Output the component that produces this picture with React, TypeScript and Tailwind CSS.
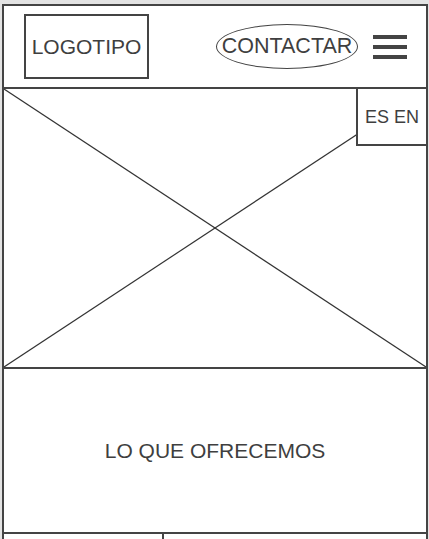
import React from 'react';

const font = { fontFamily: '"Liberation Sans", Arial, sans-serif' };

function Hamburger() {
  return (
    <div className="flex flex-col gap-[6px]">
      <div className="w-[34px] h-[4px] bg-[#444]" />
      <div className="w-[34px] h-[4px] bg-[#444]" />
      <div className="w-[34px] h-[4px] bg-[#444]" />
    </div>
  );
}

export default function App() {
  return (
    <div className="min-h-[539px] bg-[#e3e3e3] pl-[2px] pr-[1px] pt-[4px] text-[#3f3f3f]" style={font}>
      <div className="border-2 border-b-0 border-[#444] bg-white min-h-[535px]">
        {/* Header */}
        <header className="h-[83px] border-b-2 border-[#444] flex items-center justify-between pl-[20px] pr-[19px]">
          <div className="w-[125px] h-[65px] border-2 border-[#444] flex items-center justify-center text-[21px] leading-none">
            LOGOTIPO
          </div>
          <div className="flex items-center gap-[15px]">
            <div className="w-[142px] h-[45px] border border-[#444] rounded-[50%] flex items-center justify-center text-[21.5px] leading-none whitespace-nowrap">
              CONTACTAR
            </div>
            <Hamburger />
          </div>
        </header>

        {/* Hero placeholder */}
        <div className="relative h-[280px] border-b-2 border-[#444]">
          <svg className="absolute inset-0 w-full h-full" viewBox="0 0 100 100" preserveAspectRatio="none">
            <line x1="0" y1="0" x2="100" y2="100" stroke="#333" strokeWidth="1.2" vectorEffect="non-scaling-stroke" />
            <line x1="0" y1="100" x2="100" y2="0" stroke="#333" strokeWidth="1.2" vectorEffect="non-scaling-stroke" />
          </svg>
          <div className="absolute top-0 right-0 w-[70px] h-[57px] bg-white border-l-2 border-b-2 border-[#444] flex items-center justify-center text-[18px] leading-none">
            ES EN
          </div>
        </div>

        {/* Section */}
        <section className="h-[163px] flex items-center justify-center text-[21px] leading-none">
          LO QUE OFRECEMOS
        </section>

        <div className="flex border-t-2 border-[#444] h-[10px]">
          <div className="w-[160px] border-r-2 border-[#444]" />
        </div>
      </div>
    </div>
  );
}
